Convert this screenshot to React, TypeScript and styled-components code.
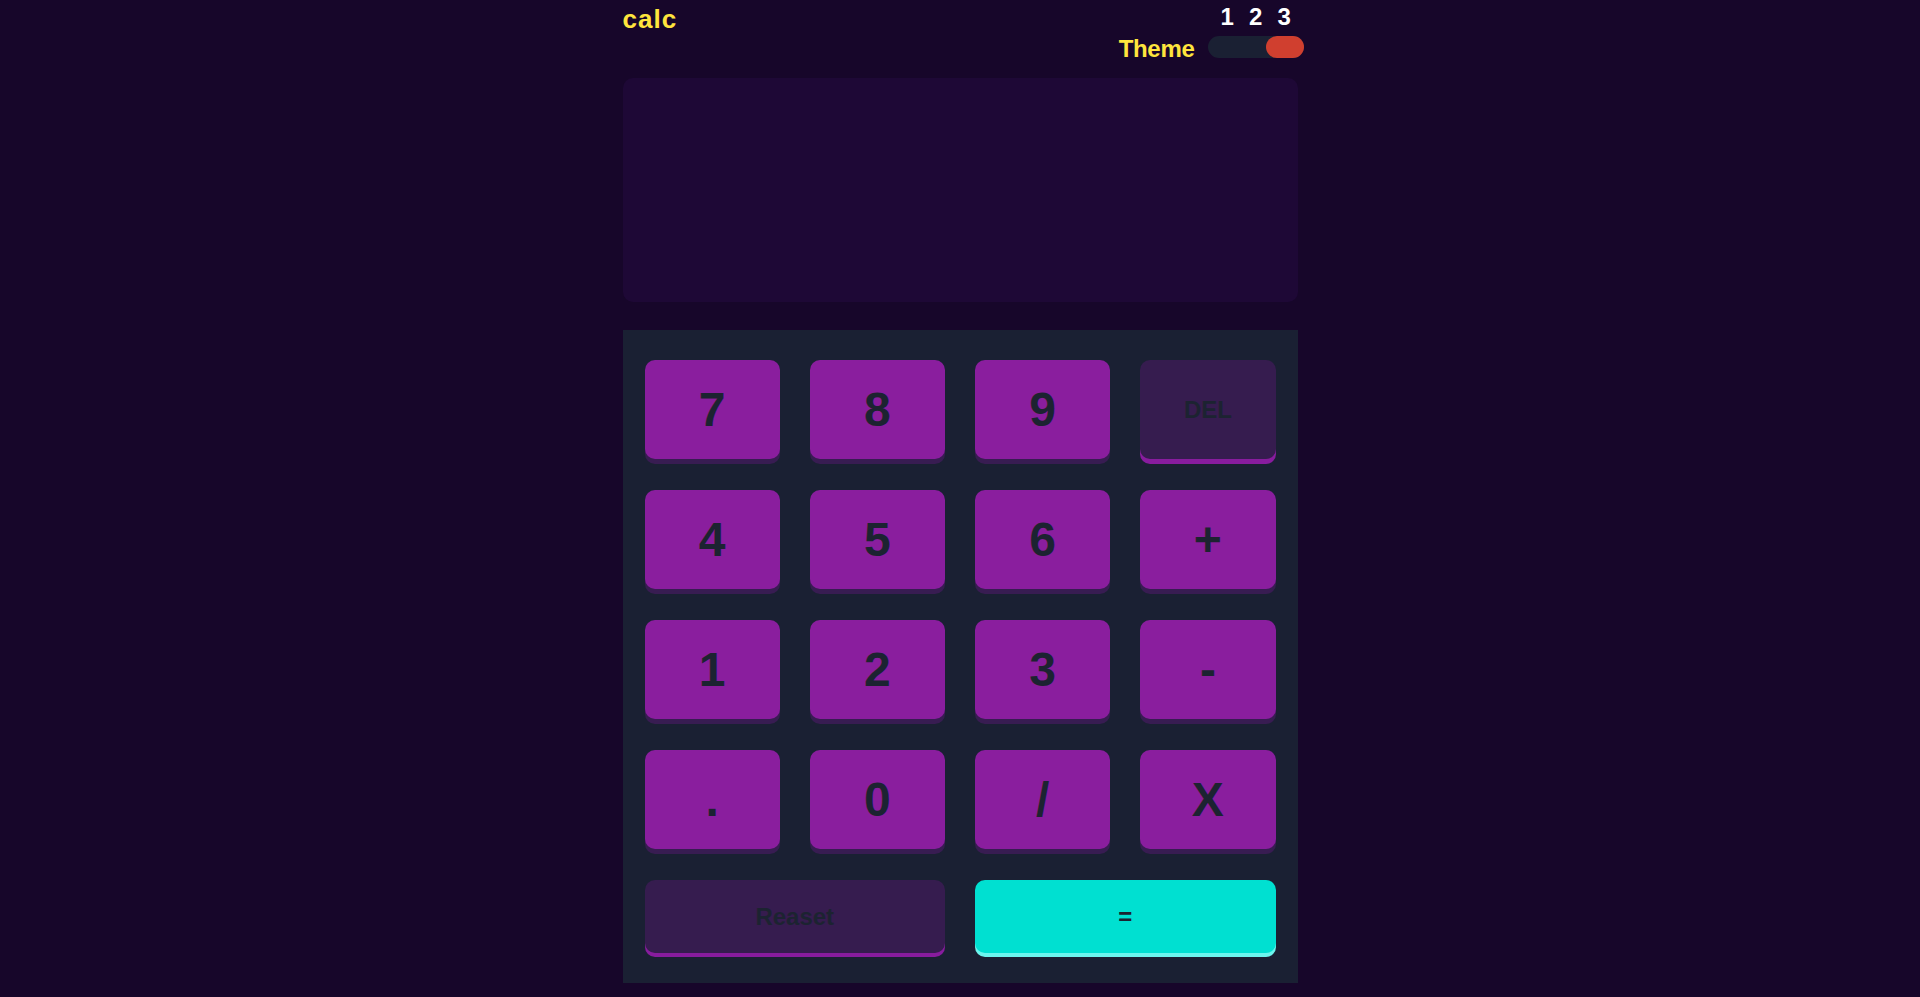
import React from "react";
import styled, { createGlobalStyle, css } from "styled-components";

const GlobalStyle = createGlobalStyle`
  html, body {
    margin: 0;
    padding: 0;
    background: #17062a;
    font-family: "Liberation Sans", Arial, sans-serif;
  }
  * { box-sizing: border-box; }
`;

const Page = styled.main`
  display: flex;
  justify-content: center;
  min-height: 997px;
  background: #17062a;
`;

const Calculator = styled.div`
  width: 675px;
  display: flex;
  flex-direction: column;
`;

const Header = styled.header`
  display: flex;
  justify-content: space-between;
  align-items: flex-start;
  padding-top: 4px;
  margin-right: -6px;
`;

const Logo = styled.h1`
  margin: 0;
  font-size: 26px;
  line-height: 30px;
  font-weight: 700;
  letter-spacing: 1px;
  color: #ffe53d;
`;

const Controls = styled.div`
  display: flex;
  flex-direction: column;
  align-items: flex-end;
`;

const Numbers = styled.div`
  display: grid;
  grid-template-columns: repeat(3, 28.5px);
  margin-right: 5px;
  color: #ffffff;
  font-size: 24px;
  font-weight: 700;
  line-height: 26px;
  text-align: center;
`;

const ThemeRow = styled.div`
  display: flex;
  align-items: center;
  gap: 13px;
  margin-top: 3px;
`;

const ThemeLabel = styled.span`
  padding-top: 5px;
  font-size: 24px;
  line-height: 22px;
  font-weight: 700;
  letter-spacing: -0.3px;
  color: #ffe53d;
`;

const Toggle = styled.div`
  width: 96px;
  height: 22px;
  border-radius: 11px;
  background: #1a2033;
  display: flex;
  justify-content: flex-end;
`;

const Knob = styled.div`
  width: 38px;
  height: 22px;
  border-radius: 11px;
  background: #d03f2f;
`;

const Screen = styled.section`
  margin-top: 18px;
  height: 224px;
  border-radius: 10px;
  background: #1e0836;
`;

const Keypad = styled.section`
  margin-top: 28px;
  background: #1a2033;
  padding: 30px 22px 30px;
  display: grid;
  grid-template-columns: repeat(4, 1fr);
  grid-template-rows: repeat(4, 99px) 73px;
  column-gap: 30px;
  row-gap: 31px;
`;

type Variant = "num" | "fn" | "reset" | "equals";

const variants = {
  num: css`
    background: #8a1e9e;
    box-shadow: 0 5px 0 #381c52;
    font-size: 48px;
  `,
  fn: css`
    background: #361c4f;
    box-shadow: 0 5px 0 #881c9e;
    font-size: 24px;
  `,
  reset: css`
    grid-column: span 2;
    background: #361c4f;
    box-shadow: 0 4px 0 #881c9e;
    font-size: 24px;
  `,
  equals: css`
    grid-column: span 2;
    background: #00e0d1;
    box-shadow: 0 4px 0 #6cf5ee;
    font-size: 24px;
  `,
};

const Key = styled.button<{ $variant: Variant }>`
  border: none;
  border-radius: 10px;
  padding: 0;
  display: flex;
  align-items: center;
  justify-content: center;
  font-family: "Liberation Sans", Arial, sans-serif;
  font-weight: 700;
  line-height: 1;
  color: #1c2331;
  cursor: pointer;
  ${(p) => variants[p.$variant]}
`;

const keys: { label: string; variant: Variant }[] = [
  { label: "7", variant: "num" },
  { label: "8", variant: "num" },
  { label: "9", variant: "num" },
  { label: "DEL", variant: "fn" },
  { label: "4", variant: "num" },
  { label: "5", variant: "num" },
  { label: "6", variant: "num" },
  { label: "+", variant: "num" },
  { label: "1", variant: "num" },
  { label: "2", variant: "num" },
  { label: "3", variant: "num" },
  { label: "-", variant: "num" },
  { label: ".", variant: "num" },
  { label: "0", variant: "num" },
  { label: "/", variant: "num" },
  { label: "X", variant: "num" },
  { label: "Reaset", variant: "reset" },
  { label: "=", variant: "equals" },
];

export default function App() {
  return (
    <>
      <GlobalStyle />
      <Page>
        <Calculator>
          <Header>
            <Logo>calc</Logo>
            <Controls>
              <Numbers>
                <span>1</span>
                <span>2</span>
                <span>3</span>
              </Numbers>
              <ThemeRow>
                <ThemeLabel>Theme</ThemeLabel>
                <Toggle>
                  <Knob />
                </Toggle>
              </ThemeRow>
            </Controls>
          </Header>
          <Screen />
          <Keypad>
            {keys.map((k) => (
              <Key key={k.label} $variant={k.variant}>
                {k.label}
              </Key>
            ))}
          </Keypad>
        </Calculator>
      </Page>
    </>
  );
}
